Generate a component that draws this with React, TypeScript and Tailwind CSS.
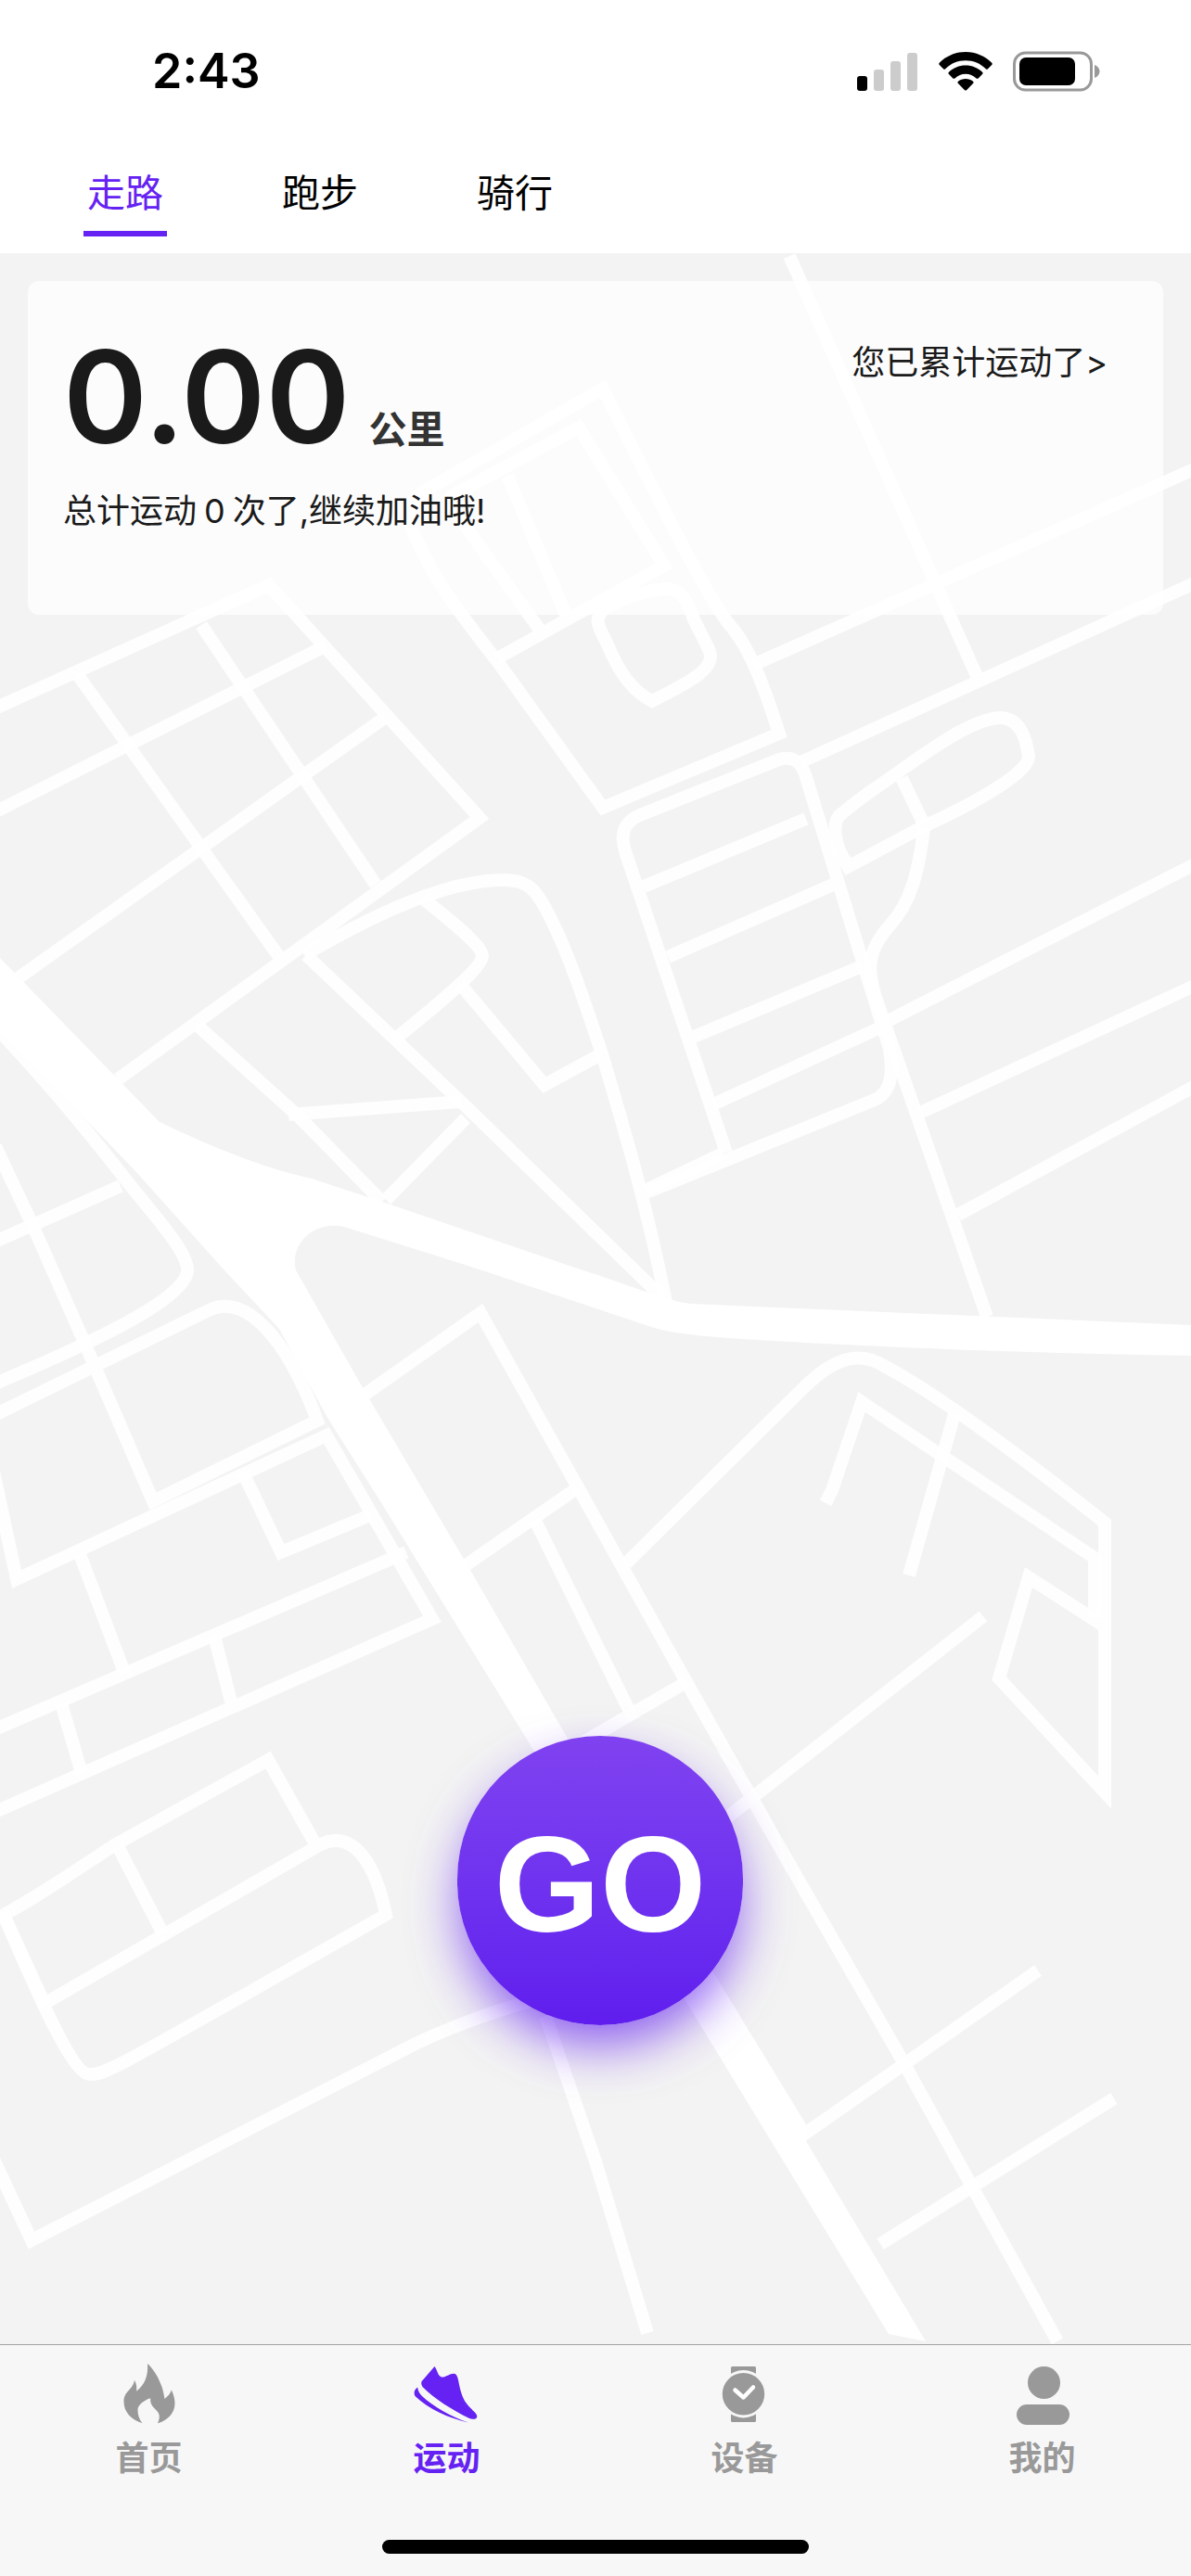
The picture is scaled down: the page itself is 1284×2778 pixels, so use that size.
import React, { useState } from "react";

// --- Tabs above the map ---
const sportTabs = ["走路", "跑步", "骑行"];

// --- Minor streets, drawn as translucent strokes so crossings look brighter ---
const streets = [
  // north west blocks
  "M-10 766 L290 631 L517 882 L127 1164",
  "M350 697 L-10 878",
  "M416 773 L15 1058",
  "M84 728 L301 1032",
  "M217 674 L405 954",
  // triangle blocks
  "M328 1030 C400 988 480 949 543 949 C568 949 577 958 590 983 C612 1025 632 1085 650 1140 C672 1215 695 1290 718 1404",
  "M330 1030 L502 1193 L715 1400",
  "M213 1106 L322 1204 L412 1296",
  "M311 1202 L497 1188",
  "M502 1206 L416 1294",
  "M456 969 C490 996 520 1020 520 1031 C520 1044 470 1085 424 1122",
  "M496 1061 L587 1170 L646 1138",
  // north blocks
  "M650 419 L460 528 C438 541 436 553 446 575 C470 630 495 660 536 713 L650 871 L840 791 C822 735 808 700 790 678 C770 655 740 600 650 419 Z",
  "M584 682 L487 547 Q482 538 490 533 L624 461 L716 610 L536 710",
  "M547 513 L610 663",
  "M720 635 C735 635 742 650 748 668 L764 700 C774 720 745 735 703 756 C680 745 665 720 655 695 C645 675 640 668 650 658 C670 645 700 635 720 635 Z",
  "M851 276 L1053 729",
  "M812 717 L1294 503",
  "M863 822 L1294 626",
  // ladder block
  "M783 1243 L674 918 Q665 889 690 879 L840 819 Q862 813 869 838 L937 1060 L958 1128 Q968 1175 943 1186 L697 1286",
  "M779 1244 L695 1284",
  "M694 956 L869 883",
  "M720 1032 L898 954",
  "M748 1118 L929 1042",
  "M769 1191 L947 1109",
  // east side
  "M996 893 C990 945 980 975 960 997 C935 1025 933 1045 947 1084 L1064 1420",
  "M914 932 C900 915 895 885 908 877 C935 854 955 843 975 828 C1020 796 1055 774 1080 774 C1100 776 1106 795 1109 816 C1109 832 1060 862 996 891 L908 938",
  "M972 839 L996 889",
  "M957 1101 L1294 929",
  "M992 1200 L1294 1060",
  "M1033 1310 L1294 1168",
  // south west blocks
  "M-8 1104 C50 1165 90 1215 123 1256 C160 1305 205 1350 202 1372 C196 1400 120 1440 -10 1494",
  "M-10 1528 L225 1413 C265 1393 310 1445 342 1532 L165 1619 L92 1450 L35 1321 L-5 1236",
  "M-10 1341 L130 1279",
  "M-16 1545 L18 1703 L352 1548 L466 1746 L-10 1956",
  "M438 1674 L-10 1867",
  "M86 1676 L135 1806",
  "M262 1588 L303 1674 L399 1634",
  "M231 1764 L249 1835",
  "M66 1837 L88 1912",
  // centre
  "M393 1504 L518 1416 L642 1638 L740 1814 L828 1970 L974 2224 L1140 2525",
  "M502 1688 L622 1605",
  "M577 1640 L683 1854",
  "M740 1814 L642 1871 L610 1890",
  // south east blocks
  "M675 1686 L865 1498 C904 1459 930 1459 953 1473 C1010 1503 1100 1570 1191 1642 L1191 1933 L1077 1810 L1109 1701 L1188 1752",
  "M890 1621 L897 1607 L929 1512 L1180 1680 L1180 1745",
  "M1029 1525 L980 1699",
  "M1060 1743 L785 1959",
  "M865 2303 L1119 2125",
  "M949 2420 L1201 2263",
  // bottom left
  "M343 1994 L289 1898 L123 1990 C70 2025 40 2045 4 2065 C40 2150 80 2240 98 2237 C115 2238 150 2215 416 2065 C405 2010 380 1970 344 1990 L49 2160",
  "M3 2063 L49 2163",
  "M127 1991 L176 2086",
  "M-8 2326 L34 2416 L450 2203 C490 2184 530 2170 575 2157",
  "M588 2174 L642 2331 L698 2516",
];

const tabItems = [
  { id: "home", label: "首页", Icon: FlameIcon },
  { id: "sport", label: "运动", Icon: ShoeIcon },
  { id: "device", label: "设备", Icon: WatchIcon },
  { id: "mine", label: "我的", Icon: PersonIcon },
];

function FlameIcon() {
  return (
    <svg viewBox="0 0 72 72" className="size-[72px]" fill="currentColor" aria-hidden="true">
      <path d="M34 3 C42 10 47 21 49.500 28 C51 33 52 37 52.400 41 C56 38 58.500 36 59.800 31.300 C62 36 63.500 41 63.500 45.700 C63.500 56 56 64 45 67.300 C47 63 47 60 46.500 58 C45 52 36 50 37.200 40.300 C29 43 23.500 48 23.500 53 C23.500 58 25 63 28.500 67.300 C16 63 8.500 55 8.500 44 C8.500 32 18 32 20 20.700 C22.500 25 22.500 29 22.100 32.700 C31 26 35 16 34 3 Z" />
    </svg>
  );
}

function ShoeIcon() {
  return (
    <svg viewBox="0 0 72 72" className="size-[72px]" fill="currentColor" aria-hidden="true">
      <path d="M22.500 6 C25 9 26 16 29.500 17.300 C34 18.500 38 13.500 43.900 13.700 C50 15 47 32 57 46 C61 52 68.500 56 68.300 60 C68 63.500 63 63.500 59 61.500 C42 53 22 41 9.500 28 C7.500 25 8 22 10 20.500 Z" />
      <path d="M4.200 28.500 C4.500 32 6 35 9 38 C22 50 40 60 59 66.500 C38 62 16 52 1.500 38 C-.5 34 1 31 4.200 28.500 Z" />
    </svg>
  );
}

function WatchIcon() {
  return (
    <svg viewBox="0 0 72 72" className="size-[72px]" fill="currentColor" aria-hidden="true">
      <rect x="21" y="6" width="27" height="60" rx="1.500" />
      <circle cx="34.500" cy="35.700" r="24.200" stroke="#f7f7f7" strokeWidth="3" />
      <path d="M25.500 31.500 L34.500 39.500 L45 28.500" fill="none" stroke="#fff" strokeWidth="4.500" strokeLinecap="round" strokeLinejoin="round" />
    </svg>
  );
}

function PersonIcon() {
  return (
    <svg viewBox="0 0 72 72" className="size-[72px]" fill="currentColor" aria-hidden="true">
      <circle cx="37.500" cy="23.500" r="17.500" />
      <rect x="8" y="47" width="57" height="22" rx="11" />
    </svg>
  );
}

function StatusBar() {
  return (
    <div className="flex h-[153px] items-center justify-between pr-24 pl-[164px] text-black">
      <span className="text-[52px] leading-[60px] font-semibold">2:43</span>
      <div className="flex items-center gap-[22px]">
        {/* Signal */}
        <svg viewBox="0 0 66 44" className="h-11 w-[66px]" aria-hidden="true">
          <rect x="0" y="27" width="11" height="16" rx="3" />
          <rect x="18" y="20" width="11" height="23" rx="3" fill="#cccccc" />
          <rect x="36" y="11" width="11" height="32" rx="3" fill="#cccccc" />
          <rect x="54" y="2" width="11" height="41" rx="3" fill="#cccccc" />
        </svg>
        {/* Wifi */}
        <svg viewBox="0 0 58 44" className="h-11 w-[58px]" aria-hidden="true">
          <path d="M29 1 C40 1 50 5.500 57 12.500 C58 13.500 58 14.200 57.200 15 L53 19.300 C52.300 20 51.500 20 50.800 19.300 C45 13.500 37.500 10.300 29 10.300 C20.500 10.300 13 13.500 7.200 19.300 C6.500 20 5.700 20 5 19.300 L.8 15 C0 14.200 0 13.500 1 12.500 C8 5.500 18 1 29 1 Z" />
          <path d="M29 15.500 C36 15.500 42.300 18.200 47 22.700 C47.800 23.500 47.800 24.300 47 25 L42.700 29.400 C42 30 41.200 30 40.500 29.400 C37.300 26.500 33.500 24.800 29 24.800 C24.500 24.800 20.700 26.500 17.500 29.400 C16.800 30 16 30 15.300 29.400 L11 25 C10.200 24.300 10.200 23.500 11 22.700 C15.700 18.200 22 15.500 29 15.500 Z" />
          <path d="M29 30 C32 30 34.800 31 37 32.800 C37.800 33.500 37.700 34.300 37 35 L30.200 42 C29.400 42.800 28.600 42.800 27.800 42 L21 35 C20.300 34.300 20.200 33.500 21 32.800 C23.200 31 26 30 29 30 Z" />
        </svg>
        {/* Battery */}
        <svg viewBox="0 0 96 44" className="h-11 w-24" aria-hidden="true">
          <rect x="1.500" y="2" width="83" height="40" rx="12" fill="none" stroke="#999999" strokeWidth="3" />
          <rect x="7" y="7" width="60" height="30" rx="7" />
          <path d="M88 15 C91 16 93.500 19 93.500 22 C93.500 25 91 28 88 29 Z" fill="#999999" />
        </svg>
      </div>
    </div>
  );
}

function MapBackground() {
  return (
    <svg
      viewBox="0 273 1284 2255"
      preserveAspectRatio="xMidYMid slice"
      className="absolute inset-0 h-full w-full"
      aria-hidden="true"
    >
      <g fill="none" stroke="#ffffff" strokeOpacity="0.85" strokeWidth="14" strokeMiterlimit="10">
        {streets.map((d) => (
          <path key={d} d={d} />
        ))}
      </g>
      {/* Main roads */}
      <path
        fill="#ffffff"
        d="M0 1033 L172 1210 C225 1235 270 1254 319 1267 L336 1271 L424 1300 L614 1365 C680 1386 715 1402 744 1406 L1284 1429 L1284 1462 C1100 1459 900 1451 785 1443 C745 1440 715 1436 699 1430 L520 1370 L371 1323 C340 1316 312 1340 319 1370 L393 1500 L508 1695 L612 1875 L769 2127 L869 2291 L869 2309 L998 2525 L958 2517 L740 2159 L575 1887 L410 1619 L352 1527 L301 1433 L242 1370 L147 1264 L0 1111 Z"
      />
    </svg>
  );
}

export default function App() {
  const [sport, setSport] = useState("走路");
  const [page, setPage] = useState("sport");

  return (
    <div className="flex min-h-screen w-full flex-col bg-white font-[Inter,'Noto_Sans_CJK_SC',sans-serif]">
      <header className="bg-white">
        <StatusBar />
        <div className="flex h-[120px] gap-[120px] px-[90px]">
          {sportTabs.map((name) => (
            <button
              key={name}
              type="button"
              onClick={() => setSport(name)}
              className={`flex h-[102px] w-[90px] items-end justify-center border-b-[6px] pb-[11px] text-[41px] leading-[60px] whitespace-nowrap ${
                sport === name ? "border-[#6522f2] text-[#6522f2]" : "border-transparent text-black"
              }`}
            >
              {name}
            </button>
          ))}
        </div>
      </header>

      <main className="relative flex flex-1 flex-col justify-between bg-[#f3f3f3] px-[30px] pt-[30px] pb-[344px]">
        <MapBackground />

        {/* Distance card */}
        <section className="relative flex h-[360px] items-start justify-between rounded-xl bg-white/70 pr-[60px] pl-[38px] text-[#1a1a1a]">
          <div className="pt-[60px]">
            <div className="flex items-baseline gap-5">
              <span className="text-[138px] leading-[130px] font-semibold">0.00</span>
              <span className="text-[41px] font-bold text-[#333333]">公里</span>
            </div>
            <p className="mt-7 text-[36px] leading-[56px]">
              总计运动<span className="mx-2">0</span>次了,继续加油哦!
            </p>
          </div>
          <a href="#history" className="mt-[60px] text-[36px] leading-[56px]">
            您已累计运动了&gt;
          </a>
        </section>

        <div className="relative flex justify-center pl-[10px]">
          <button
            type="button"
            className="h-[312px] w-[308px] rounded-full bg-linear-to-b from-[#8042f0] to-[#601dee] pt-2 font-['Liberation_Sans',sans-serif] text-[147px] font-bold text-white shadow-[0_26px_54px_-4px_rgba(98,32,238,0.7)]"
          >
            GO
          </button>
        </div>
      </main>

      <footer className="border-t border-[#a3a3a3] bg-[#f7f7f7] pb-6">
        <nav className="grid grid-cols-4">
          {tabItems.map(({ id, label, Icon }) => (
            <button
              key={id}
              type="button"
              onClick={() => setPage(id)}
              className={`flex flex-col items-center gap-[13px] pt-[17px] text-[36px] leading-10 font-bold ${
                page === id ? "text-[#6522f2]" : "text-[#999999]"
              }`}
            >
              <Icon />
              {label}
            </button>
          ))}
        </nav>
        <div className="mx-auto mt-[68px] h-[15px] w-[460px] rounded-full bg-black"></div>
      </footer>
    </div>
  );
}
